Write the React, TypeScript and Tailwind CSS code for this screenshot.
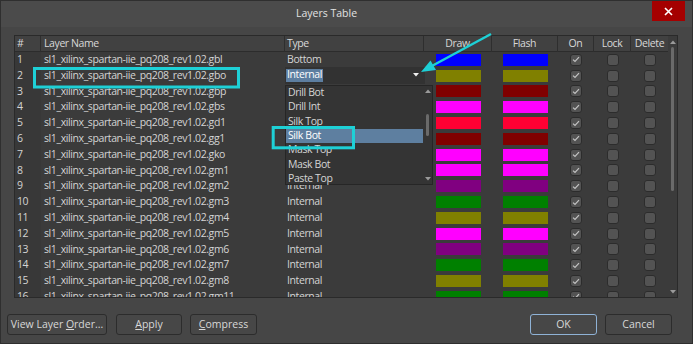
import React from "react";

const PREFIX = "sl1_xilinx_spartan-iie_pq208_rev1.02.";

const rows: { ext: string; type: string; color: string }[] = [
  { ext: "gbl", type: "Bottom", color: "#0000ff" },
  { ext: "gbo", type: "Internal", color: "#808000" },
  { ext: "gbp", type: "", color: "#800000" },
  { ext: "gbs", type: "", color: "#ff00ff" },
  { ext: "gd1", type: "", color: "#ff0033" },
  { ext: "gg1", type: "", color: "#800000" },
  { ext: "gko", type: "", color: "#ff00ff" },
  { ext: "gm1", type: "", color: "#ff00ff" },
  { ext: "gm2", type: "Internal", color: "#800080" },
  { ext: "gm3", type: "Internal", color: "#008000" },
  { ext: "gm4", type: "Internal", color: "#808000" },
  { ext: "gm5", type: "Internal", color: "#ff00ff" },
  { ext: "gm6", type: "Internal", color: "#800080" },
  { ext: "gm7", type: "Internal", color: "#008000" },
  { ext: "gm8", type: "Internal", color: "#808000" },
  { ext: "gm11", type: "Internal", color: "#008000" },
];

const listItems = ["Drill Bot", "Drill Int", "Silk Top", "Silk Bot", "Mask Top", "Mask Bot", "Paste Top"];

const cols = "grid grid-cols-[26px_244px_139px_68px_66px_36px_37px_37px]";

function Check({ checked }: { checked?: boolean }) {
  return (
    <div className="w-[12px] h-[12px] rounded-[3px] bg-[#535353] border border-[#2c2c2c] flex items-center justify-center">
      {checked && (
        <svg width="8" height="7" viewBox="0 0 8 7">
          <path d="M1 3.6 L3 5.5 L7 1.2" fill="none" stroke="#c4c4c4" strokeWidth="1.2" />
        </svg>
      )}
    </div>
  );
}

function UpArrow() {
  return (
    <svg width="6" height="4" viewBox="0 0 6 4">
      <path d="M0 4 L3 0.5 L6 4 Z" fill="#9a9a9a" />
    </svg>
  );
}
function DownArrow({ color = "#9a9a9a" }: { color?: string }) {
  return (
    <svg width="6" height="4" viewBox="0 0 6 4">
      <path d="M0 0 L6 0 L3 3.5 Z" fill={color} />
    </svg>
  );
}

function Btn({ children, focused, className }: { children: React.ReactNode; focused?: boolean; className: string }) {
  return (
    <div
      className={
        "h-[21px] rounded-[3px] bg-[#474747] flex items-center justify-center text-[10.5px] text-[#d8d8d8] border " +
        (focused ? "border-[#8fb2d6] " : "border-[#2c2c2c] ") +
        className
      }
    >
      {children}
    </div>
  );
}

export default function App() {
  return (
    <div className="relative w-[693px] h-[344px] bg-[#464646] border border-[#2f2f2f] flex flex-col font-['Open_Sans',sans-serif] text-[10.5px] tracking-[-0.4px] text-[#d4d4d4] overflow-hidden">
      {/* Title bar */}
      <div className="h-[26px] flex items-start bg-[#4b4b4b]">
        <div className="flex-1 h-[26px] flex items-center justify-center text-[10.5px] tracking-normal text-[#e2e2e2]">Layers Table</div>
        <div className="w-[40px] flex pr-[7px] justify-end">
          <div className="w-[33px] h-[20px] bg-[#a50000] flex items-center justify-center">
            <svg width="9" height="9" viewBox="0 0 9 9">
              <path d="M1 1 L8 8 M8 1 L1 8" stroke="#ffffff" strokeWidth="1.6" />
            </svg>
          </div>
        </div>
      </div>

      {/* Table */}
      <div className="ml-[13px] mt-[8px] w-[664px] h-[263px] border border-[#2a2a2a] bg-[#3b3b3b] flex">
        <div className="w-[653px] flex flex-col">
          {/* header */}
          <div className={cols + " h-[16px] bg-[#414141] border-b border-[#2c2c2c] text-[#d8d8d8]"}>
            <div className="pl-[2px] flex items-center border-r border-[#2e2e2e]">#</div>
            <div className="pl-[3px] flex items-center border-r border-[#2e2e2e]">Layer Name</div>
            <div className="pl-[2px] flex items-center border-r border-[#2e2e2e]">Type</div>
            <div className="flex items-center justify-center border-r border-[#2e2e2e]">Draw</div>
            <div className="flex items-center justify-center border-r border-[#2e2e2e]">Flash</div>
            <div className="flex items-center justify-center border-r border-[#2e2e2e]">On</div>
            <div className="flex items-center justify-center border-r border-[#2e2e2e]">Lock</div>
            <div className="flex items-center justify-center">Delete</div>
          </div>
          {/* rows */}
          <div className="flex-1 overflow-hidden flex flex-col">
            {rows.map((r, i) => (
              <div key={i} className={cols + " h-[15.8px] shrink-0"}>
                <div className="pl-[2px] flex items-center bg-[#383838]">{i + 1}</div>
                <div className="pl-[3px] flex items-center whitespace-nowrap">{PREFIX + r.ext}</div>
                <div className="pl-[2px] flex items-center relative">
                  {i === 1 ? (
                    <>
                      <div className="absolute left-0 top-[-1px] w-[140px] h-[17px] bg-[#323232] flex items-center">
                        <span className="ml-[1px] px-[1px] h-[13px] flex items-center bg-[#5d7ea0] text-white">Internal</span>
                        <div className="ml-auto mr-[6px] flex items-center">
                          <DownArrow color="#f0f0f0" />
                        </div>
                      </div>
                      <div className="absolute left-0 top-[17px] w-[148px] h-[100px] bg-[#343434] border border-[#262626] z-10 flex">
                        <div className="flex-1 flex flex-col">
                          {listItems.map((t) => (
                            <div
                              key={t}
                              className={
                                "h-[14.3px] shrink-0 pl-[2px] flex items-center " +
                                (t === "Silk Bot" ? "bg-[#5e7fa0] text-white" : "")
                              }
                            >
                              {t}
                            </div>
                          ))}
                        </div>
                        <div className="w-[9px] flex flex-col items-center py-[3px]">
                          <UpArrow />
                          <div className="mt-[21px] w-[3px] h-[22px] rounded-full bg-[#6a6a6a]" />
                          <div className="mt-auto">
                            <DownArrow />
                          </div>
                        </div>
                      </div>
                    </>
                  ) : (
                    r.type
                  )}
                </div>
                <div className="pl-[12px] flex items-center">
                  <div className="w-[45px] h-[12px]" style={{ backgroundColor: r.color }} />
                </div>
                <div className="pl-[11px] flex items-center">
                  <div className="w-[45px] h-[12px]" style={{ backgroundColor: r.color }} />
                </div>
                <div className="flex items-center justify-center">
                  <Check checked />
                </div>
                <div className="flex items-center justify-center">
                  <Check />
                </div>
                <div className="flex items-center justify-center">
                  <Check />
                </div>
              </div>
            ))}
          </div>
        </div>
        {/* scrollbar */}
        <div className="w-[9px] flex flex-col items-center pt-[4px] pb-[3px]">
          <UpArrow />
          <div className="mt-[3px] w-[3px] h-[144px] rounded-full bg-[#6a6a6a]" />
          <div className="mt-auto">
            <DownArrow />
          </div>
        </div>
      </div>

      {/* Buttons */}
      <div className="mt-[16px] flex px-[6px] tracking-normal">
        <Btn className="w-[100px]">
          <span>
            View Layer <span className="underline">O</span>rder...
          </span>
        </Btn>
        <Btn className="w-[66px] ml-[9px]">
          <span>
            <span className="underline">A</span>pply
          </span>
        </Btn>
        <Btn className="w-[67px] ml-[8px]">
          <span>
            <span className="underline">C</span>ompress
          </span>
        </Btn>
        <Btn focused className="w-[67px] ml-auto">
          OK
        </Btn>
        <Btn className="w-[67px] ml-[8px] mr-[14px]">Cancel</Btn>
      </div>

      {/* Annotation overlay */}
      <svg className="absolute left-[-1px] top-[-1px] pointer-events-none z-20" width="693" height="344" viewBox="0 0 693 344">
        <rect x="34.5" y="68.5" width="204" height="18.5" fill="none" stroke="#1ed0d6" strokeWidth="3" />
        <rect x="273.2" y="127.5" width="80.3" height="20.3" fill="none" stroke="#1ed0d6" strokeWidth="3" />
        <line x1="491" y1="34" x2="430" y2="67" stroke="#1ed0d6" strokeWidth="2.5" />
        <polygon points="421,72 430.5,60.5 436,70" fill="#1ed0d6" />
      </svg>
    </div>
  );
}
